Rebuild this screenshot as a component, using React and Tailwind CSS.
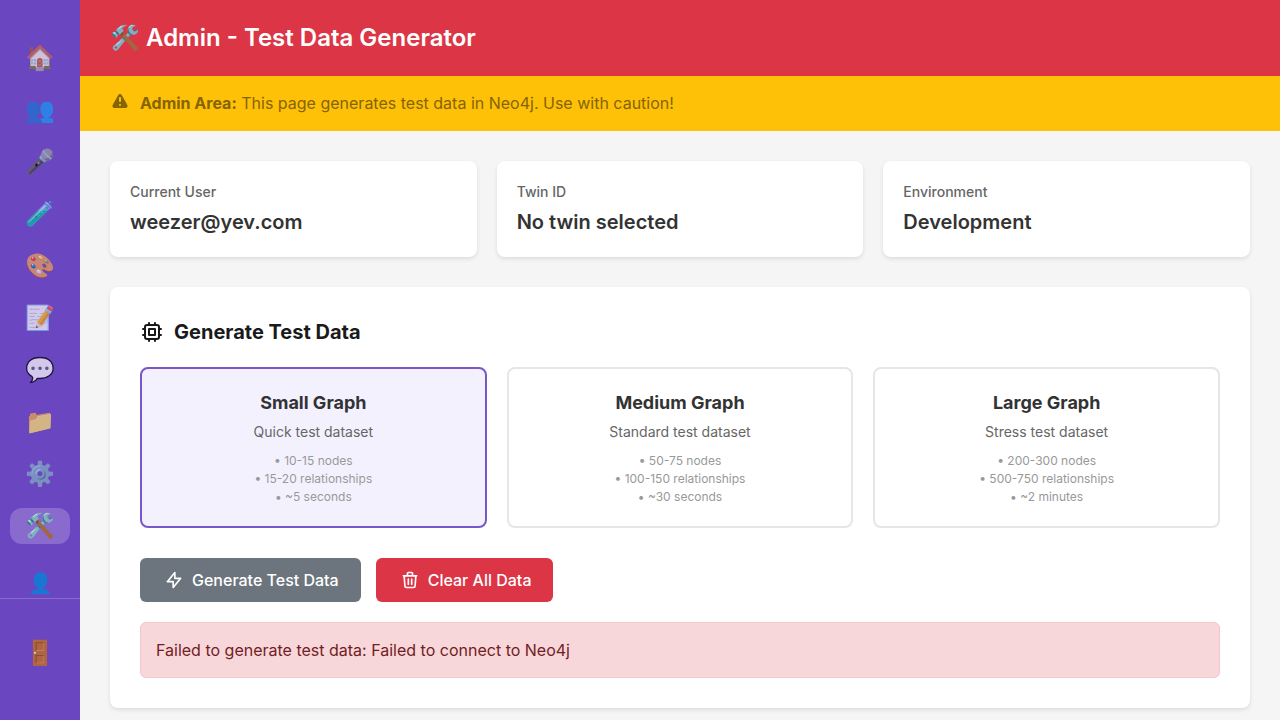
import { useState } from "react";
import {
  HiExclamation,
  HiOutlineChip,
  HiOutlineLightningBolt,
  HiOutlineTrash,
} from "react-icons/hi";

const navItems = [
  { icon: "🏠", label: "Home" },
  { icon: "👥", label: "Contacts" },
  { icon: "🎤", label: "Record" },
  { icon: "🧪", label: "Experiments" },
  { icon: "🎨", label: "Design" },
  { icon: "📝", label: "Notes" },
  { icon: "💬", label: "Chat" },
  { icon: "📁", label: "Files" },
  { icon: "⚙️", label: "Settings" },
  { icon: "🛠️", label: "Admin", active: true },
];

const infoCards = [
  { label: "Current User", value: "weezer@yev.com" },
  { label: "Twin ID", value: "No twin selected" },
  { label: "Environment", value: "Development" },
];

const graphSizes = [
  {
    title: "Small Graph",
    description: "Quick test dataset",
    details: ["10-15 nodes", "15-20 relationships", "~5 seconds"],
  },
  {
    title: "Medium Graph",
    description: "Standard test dataset",
    details: ["50-75 nodes", "100-150 relationships", "~30 seconds"],
  },
  {
    title: "Large Graph",
    description: "Stress test dataset",
    details: ["200-300 nodes", "500-750 relationships", "~2 minutes"],
  },
];

function Sidebar() {
  return (
    <aside className="flex w-20 shrink-0 flex-col bg-[#6b46c1] text-2xl text-white">
      <nav className="flex flex-col gap-4 px-2.5 pt-10">
        {navItems.map((item) => (
          <a
            key={item.label}
            href="#"
            aria-label={item.label}
            aria-current={item.active ? "page" : undefined}
            className={
              item.active
                ? "flex h-9 items-center justify-center rounded-xl bg-white/20"
                : "flex h-9 items-center justify-center rounded-xl"
            }
          >
            <span className={item.active ? "leading-9" : "leading-9 opacity-70"}>{item.icon}</span>
          </a>
        ))}
      </nav>
      <a
        href="#"
        aria-label="Profile"
        className="mt-6 flex h-[30px] items-center justify-center text-xl leading-[30px]"
      >
        👤
      </a>
      <div className="flex justify-center border-t border-white/20 pt-9">
        <button type="button" aria-label="Log out" className="h-9 leading-9">
          🚪
        </button>
      </div>
    </aside>
  );
}

function GraphOption({ option, selected, onSelect }) {
  return (
    <button
      type="button"
      aria-pressed={selected}
      onClick={onSelect}
      className={
        selected
          ? "rounded-lg border-2 border-[#7a57c8] bg-[#f4f1ff] p-5 text-center"
          : "rounded-lg border-2 border-[#e5e5ea] bg-white p-5 text-center"
      }
    >
      <span className="mb-[5px] block text-lg leading-[27px] font-bold text-[#333333]">
        {option.title}
      </span>
      <span className="mb-2.5 block text-sm leading-[21px] text-[#666666]">
        {option.description}
      </span>
      <span className="block text-xs leading-[18px] text-[#999999]">
        {option.details.map((line) => (
          <span key={line} className="block">
            • {line}
          </span>
        ))}
      </span>
    </button>
  );
}

export default function App() {
  const [selected, setSelected] = useState(0);

  return (
    <div className="flex min-h-screen bg-[#f5f5f5] font-['Inter',sans-serif] text-base text-[#1a1a1a]">
      <Sidebar />
      <div className="min-w-0 flex-1">
        <header className="bg-[#dc3545] px-[30px] py-5">
          <h1 className="text-2xl leading-9 font-semibold text-white">
            🛠️ Admin - Test Data Generator
          </h1>
        </header>
        <div className="flex items-start gap-2.5 bg-[#ffc107] px-[30px] py-[15px] leading-[25px] text-[#856404]">
          <HiExclamation size={20} className="mt-px" />
          <p>
            <strong className="font-bold">Admin Area:</strong> This page generates test data in
            Neo4j. Use with caution!
          </p>
        </div>
        <main className="flex flex-col gap-[30px] px-[30px] pt-[30px] pb-3">
          <section className="grid grid-cols-3 gap-5">
            {infoCards.map((card) => (
              <div
                key={card.label}
                className="rounded-lg bg-white p-5 shadow-[0_2px_4px_rgba(0,0,0,0.1)]"
              >
                <h3 className="mb-[5px] text-sm leading-[21px] font-medium text-[#666666]">
                  {card.label}
                </h3>
                <p className="text-xl leading-[30px] font-semibold text-[#333333]">{card.value}</p>
              </div>
            ))}
          </section>
          <section className="rounded-lg bg-white p-[30px] shadow-[0_2px_4px_rgba(0,0,0,0.1)]">
            <h2 className="mb-5 flex items-center gap-2.5 text-xl leading-[30px] font-bold">
              <HiOutlineChip size={24} />
              Generate Test Data
            </h2>
            <div className="mb-[30px] grid grid-cols-3 gap-5">
              {graphSizes.map((option, i) => (
                <GraphOption
                  key={option.title}
                  option={option}
                  selected={i === selected}
                  onSelect={() => setSelected(i)}
                />
              ))}
            </div>
            <div className="mb-5 flex gap-[15px]">
              <button
                type="button"
                className="flex items-center gap-2 rounded-md bg-[#6c757d] py-2.5 pr-[22px] pl-6 font-medium text-white"
              >
                <HiOutlineLightningBolt size={20} />
                Generate Test Data
              </button>
              <button
                type="button"
                className="flex items-center gap-2 rounded-md bg-[#dc3545] py-2.5 pr-[22px] pl-6 font-medium text-white"
              >
                <HiOutlineTrash size={20} />
                Clear All Data
              </button>
            </div>
            <div
              role="alert"
              className="rounded-md border border-[#f5c6cb] bg-[#f8d7da] p-[15px] text-[#721c24]"
            >
              Failed to generate test data: Failed to connect to Neo4j
            </div>
          </section>
        </main>
      </div>
    </div>
  );
}
